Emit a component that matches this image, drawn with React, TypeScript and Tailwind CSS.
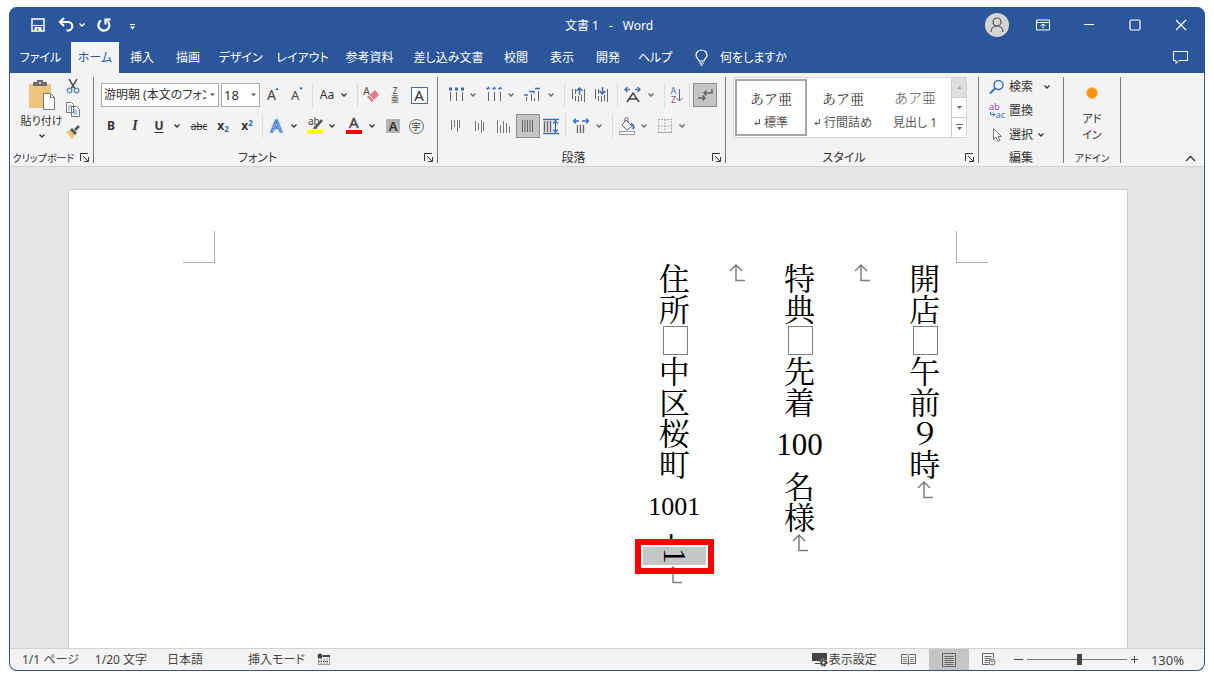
import React, { useState } from 'react'

type IconProps = {
  children: React.ReactNode;
  w?: number;
  h?: number;
}

const Icon: React.FC<IconProps> = ({ children, w = 20, h = 20 }) => (
  <svg width={w} height={h} viewBox={`0 0 ${w} ${h}`} fill="none" stroke="currentColor" className="shrink-0 overflow-visible" aria-hidden="true">
    {children}
  </svg>
)

type ToolProps = {
  label: string;
  children: React.ReactNode;
  className?: string;
  pressed?: boolean;
}

// リボンの小さいボタン
const Tool: React.FC<ToolProps> = ({ label, children, className = 'w-6', pressed = false }) => (
  <button
    type="button"
    aria-label={label}
    className={`flex h-6 shrink-0 items-center justify-center ${className} ${pressed ? 'border border-[#8c8c8c] bg-[#c5c5c5]' : ''}`}
  >
    {children}
  </button>
)

const Chevron = () => (
  <Icon w={8} h={6}>
    <path d="M1.500 1.500 4 4l2.500-2.500" strokeWidth="1.300" />
  </Icon>
)

const Caret: React.FC<{ label: string }> = ({ label }) => (
  <button type="button" aria-label={label} className="mr-1 flex h-6 w-3 shrink-0 items-center justify-center">
    <Chevron />
  </button>
)

const Sep = () => <div className="mx-[3px] h-6 w-px shrink-0 bg-[#dcdcdc]" />

const Divider = () => <div className="mt-1 mb-[3px] w-px shrink-0 bg-[#7c7c7c]" />

const Launcher: React.FC<{ label: string }> = ({ label }) => (
  <button type="button" aria-label={label} className="absolute right-1 bottom-1">
    <Icon w={9} h={9}>
      <path d="M.5 8V.5H8M3 3l5 5M8.500 4v4.500H4" />
    </Icon>
  </button>
)

type GroupProps = {
  title: string;
  children: React.ReactNode;
  className: string;
  launcher?: boolean;
  small?: boolean;
}

const Group: React.FC<GroupProps> = ({ title, children, className, launcher = false, small = false }) => (
  <section aria-label={title} className={`relative flex shrink-0 flex-col ${className}`}>
    <div className="h-[77px]">{children}</div>
    <div className={`h-4 text-center leading-4 whitespace-nowrap ${launcher ? 'pr-4' : ''} ${small ? 'text-[10px]' : ''}`}>{title}</div>
    {launcher && <Launcher label={`${title}の詳細`} />}
  </section>
)

const Clipboard = () => (
  <div className="flex pt-1.5">
    <button type="button" className="ml-2 flex w-[47px] flex-col items-center">
      <Icon w={30} h={32}>
        <path d="M2 5h22v24H2z" fill="#ecc57d" stroke="none" />
        <path d="M6 3h4V1h6v2h4v4H6z" fill="#6b6b6b" stroke="none" />
        <path d="M12 3h2v1.500h-2z" fill="#fff" stroke="none" />
        <path d="M16.500 14.500h7l4 4v12h-11z" fill="#fff" stroke="#777" />
        <path d="M23.500 14.500v4h4" stroke="#777" />
      </Icon>
      <span className="mt-0.5 text-[11px] leading-4 whitespace-nowrap">貼り付け</span>
      <span className="mt-1"><Chevron /></span>
    </button>
    <div className="flex flex-col">
      <button type="button" aria-label="切り取り" className="flex h-[22px] w-4 items-start justify-center">
        <Icon w={14} h={15}>
          <path d="M3 0l6 10M11 0 5 10" stroke="#555" strokeWidth="1.500" />
          <circle cx="3.500" cy="11.500" r="2.300" stroke="#5b88c4" strokeWidth="1.300" />
          <circle cx="10.500" cy="11.500" r="2.300" stroke="#5b88c4" strokeWidth="1.300" />
        </Icon>
      </button>
      <button type="button" aria-label="コピー" className="flex h-[22px] w-4 items-start justify-center">
        <Icon w={14} h={16}>
          <path d="M.5 1.500h5l2 2v8h-7zM5.500 5.500h5l3 3v7h-8z" fill="#fff" stroke="#777" />
          <path d="M2 5h4M2 7h2M2 9h2M7.500 9h3M7.500 11h4M7.500 13h4" stroke="#5b88c4" />
        </Icon>
      </button>
      <button type="button" aria-label="書式のコピー/貼り付け" className="flex h-[22px] w-4 items-start justify-center pt-0.5">
        <Icon w={14} h={14}>
          <path d="M0 7l4-2 5 5-3 4z" fill="#ecc57d" stroke="none" />
          <path d="M4 5l2-2 5 5-2 2z" fill="#555" stroke="none" />
          <path d="M9 5l4-4" stroke="#555" strokeWidth="2.500" />
        </Icon>
      </button>
    </div>
  </div>
)

const FontTools = () => {
  const [font, setFont] = useState('mincho')
  const [size, setSize] = useState('18')

  return (
    <div className="flex flex-col gap-[7px] pt-2.5">
      <div className="flex">
        <div className="relative ml-[7px] w-[118px]">
          <select
            aria-label="フォント"
            value={font}
            onChange={(e) => setFont(e.target.value)}
            className="h-6 w-full appearance-none overflow-hidden border border-[#ababab] bg-white pr-3 pl-0.5"
          >
            <option value="mincho">游明朝 (本文のフォント)</option>
          </select>
          <span className="pointer-events-none absolute top-2.5 right-1">
            <Icon w={5} h={4}><path d="M0 .5h5L2.500 3z" fill="#555" stroke="none" /></Icon>
          </span>
        </div>
        <div className="relative mr-px ml-0.5 w-[39px]">
          <select
            aria-label="フォント サイズ"
            value={size}
            onChange={(e) => setSize(e.target.value)}
            className="h-6 w-full appearance-none border border-[#ababab] bg-white pl-0.5 text-[13px]"
          >
            <option value="18">18</option>
          </select>
          <span className="pointer-events-none absolute top-2.5 right-1">
            <Icon w={5} h={4}><path d="M0 .5h5L2.500 3z" fill="#555" stroke="none" /></Icon>
          </span>
        </div>
        <Tool label="フォント サイズの拡大">
          <Icon>
            <text x="4" y="15" fontSize="14" fill="#444" stroke="none">A</text>
            <path d="M12 5l2-2.500L16 5z" fill="#3b6fb5" stroke="none" />
          </Icon>
        </Tool>
        <Tool label="フォント サイズの縮小">
          <Icon>
            <text x="4" y="15" fontSize="13" fill="#444" stroke="none">A</text>
            <path d="M12 2.500h4L14 5z" fill="#3b6fb5" stroke="none" />
          </Icon>
        </Tool>
        <Sep />
        <Tool label="文字種の変換" className="w-[22px] text-[12px]">Aa</Tool>
        <Caret label="文字種の変換の一覧" />
        <Sep />
        <Tool label="すべての書式をクリア" className="w-[22px]">
          <Icon>
            <text x="1" y="10" fontSize="11" fill="#555" stroke="none">A</text>
            <path d="M13 5l4 5-7 7-5-5z" fill="#e5798c" stroke="none" />
            <path d="M7 10l5 5" stroke="#fff" />
          </Icon>
        </Tool>
        <Tool label="ルビ">
          <span className="flex flex-col items-center text-[8px] leading-2">
            <span>Z</span>
            <span>亜</span>
          </span>
        </Tool>
        <Tool label="囲み線">
          <span className="flex h-[17px] w-[17px] items-center justify-center border border-[#3b6fb5] bg-white text-[15px]">A</span>
        </Tool>
      </div>
      <div className="flex pl-[5px]">
        <Tool label="太字"><b className="text-[12px]">B</b></Tool>
        <Tool label="斜体"><b className="font-['Liberation_Serif',serif] text-[14px] italic">I</b></Tool>
        <Tool label="下線"><b className="text-[12px] underline underline-offset-2">U</b></Tool>
        <Caret label="下線の一覧" />
        <Tool label="取り消し線"><span className="text-[10px] line-through">abc</span></Tool>
        <Tool label="下付き"><b className="text-[12px]">x<sub className="text-[8px] text-[#3b6fb5]">2</sub></b></Tool>
        <Tool label="上付き"><b className="text-[12px]">x<sup className="text-[8px] text-[#3b6fb5]">2</sup></b></Tool>
        <Sep />
        <Tool label="文字の効果と体裁" className="w-[22px]">
          <Icon>
            <text x="4" y="16" fontSize="17" fill="#fff" stroke="#3b7bc8" strokeWidth="1" className="drop-shadow-[0_0_1px_#6fa3e0]">A</text>
          </Icon>
        </Tool>
        <Caret label="文字の効果の一覧" />
        <Tool label="蛍光ペンの色" className="w-[22px]">
          <Icon>
            <text x="3" y="9" fontSize="10" fill="#444" stroke="none">ab</text>
            <path d="M10 12l7-8" stroke="#555" strokeWidth="2.500" />
            <path d="M8 13l1.500-3 3 2.500z" fill="#555" stroke="none" />
            <path d="M2 14h16v4H2z" fill="#ffff00" stroke="none" />
          </Icon>
        </Tool>
        <Caret label="蛍光ペンの色の一覧" />
        <Tool label="フォントの色">
          <Icon>
            <text x="5" y="12" fontSize="15" fill="#444" stroke="#444" strokeWidth=".4">A</text>
            <path d="M2 14h16v4H2z" fill="#ff0000" stroke="none" />
          </Icon>
        </Tool>
        <Caret label="フォントの色の一覧" />
        <Tool label="文字の網かけ" className="w-[22px]">
          <span className="flex h-3.5 w-3.5 items-center justify-center bg-[#b4b4b4] text-[13px] leading-none font-semibold">A</span>
        </Tool>
        <Tool label="囲い文字">
          <span className="flex h-[15px] w-[15px] items-center justify-center rounded-full border border-[#666] text-[9px] leading-none">字</span>
        </Tool>
      </div>
    </div>
  )
}

const ParagraphTools = () => (
  <div className="flex flex-col gap-[7px] pt-2.5 text-[#666]">
    <div className="flex pl-[7px]">
      <Tool label="箇条書き" className="w-[22px]">
        <Icon>
          <path d="M4.500 7v9M10.500 7v9M16.500 7v9" />
          <path d="M3 4h3M9 4h3M15 4h3" stroke="#3b6fb5" strokeWidth="3" />
        </Icon>
      </Tool>
      <Caret label="箇条書きの一覧" />
      <Tool label="段落番号" className="w-[22px]">
        <Icon>
          <path d="M4.500 7v9M10.500 7v9M16.500 7v9" />
          <path d="M2.500 3l1 1 1-1.500 1 1.500M8.500 3l1 1 1-1.500 1 1.500M14.500 3l1 1 1-1.500 1 1.500" stroke="#3b6fb5" strokeWidth="1.300" />
        </Icon>
      </Tool>
      <Caret label="段落番号の一覧" />
      <Tool label="アウトライン">
        <Icon>
          <path d="M3.500 12v4M8.500 9v7M11.500 13v3M15.500 6v10" />
          <path d="M1 10h4M6 6.500h5v2M12 3.500h5" stroke="#3b6fb5" strokeWidth="1.300" />
        </Icon>
      </Tool>
      <Caret label="アウトラインの一覧" />
      <Sep />
      <Tool label="インデントを減らす" className="w-[22px]">
        <Icon>
          <path d="M3.500 4v10M6.500 4v5M6.500 11v5M9.500 11v6M12.500 10v6M15.500 4v13" />
          <path d="M10.500 10V3.500M7.500 6l3-3 3 3" stroke="#3b6fb5" strokeWidth="1.500" />
        </Icon>
      </Tool>
      <Tool label="インデントを増やす">
        <Icon>
          <path d="M3.500 4v10M6.500 4v5M6.500 11v5M9.500 11v6M12.500 10v6M15.500 4v13" />
          <path d="M10.500 2v6.500M7.500 6l3 3 3-3" stroke="#3b6fb5" strokeWidth="1.500" />
        </Icon>
      </Tool>
      <Sep />
      <Tool label="拡張書式">
        <Icon>
          <path d="M4 17l6-9 6 9M6.500 14h7" stroke="#444" strokeWidth="1.500" />
          <path d="M7 4.500H2M4.500 2 2 4.500 4.500 7M12 4.500h5M14.500 2 17 4.500 14.500 7" stroke="#3b6fb5" strokeWidth="1.300" />
        </Icon>
      </Tool>
      <Caret label="拡張書式の一覧" />
      <Sep />
      <Tool label="並べ替え" className="w-[18px]">
        <span className="flex items-center">
          <span className="flex flex-col items-center text-[9px] leading-[9px]">
            <span className="text-[#3b6fb5]">A</span>
            <span className="text-[#8e4da5]">Z</span>
          </span>
          <Icon w={7} h={16}><path d="M3.500 2v12M.5 11l3 3 3-3" /></Icon>
        </span>
      </Tool>
      <Sep />
      <Tool label="編集記号の表示/非表示" pressed>
        <Icon>
          <path d="M17 4v4H9M11.500 5.500 9 8l2.500 2.500M3 13h7M7.500 10.500 10 13l-2.500 2.500" strokeWidth="1.500" />
        </Icon>
      </Tool>
    </div>
    <div className="flex pl-1.5">
      <Tool label="上揃え">
        <Icon><path d="M5.500 4v10M8.500 4v7M11.500 4v12M13.500 4v8" stroke="#777" /></Icon>
      </Tool>
      <Tool label="上下中央揃え">
        <Icon><path d="M5.500 5v10M8.500 7v7M11.500 4v13M13.500 6v9" stroke="#777" /></Icon>
      </Tool>
      <Tool label="下揃え">
        <Icon><path d="M3.500 4v13M6.500 9v8M9.500 5v12M12.500 7v10M15.500 10v7" stroke="#777" /></Icon>
      </Tool>
      <Tool label="両端揃え" pressed>
        <Icon><path d="M4.500 4v12M7 4v12M9.500 4v12M12 4v12M14.500 4v12" /></Icon>
      </Tool>
      <Tool label="均等割り付け" className="w-[22px]">
        <Icon>
          <path d="M3.500 5v11M6.500 5v11M9.500 5v11" strokeWidth="1.500" />
          <path d="M2 3.500h16M2 17.500h16M14.500 5v11M12 7.500 14.500 5 17 7.500M12 13.500l2.500 2.500 2.500-2.500" stroke="#3b6fb5" strokeWidth="1.300" />
        </Icon>
      </Tool>
      <Sep />
      <Tool label="行と段落の間隔">
        <Icon>
          <path d="M6.500 9v8M9.500 9v8M12.500 9v8" strokeWidth="1.300" />
          <path d="M8 5H2.500M5 2.500 2.500 5 5 7.500M11 5h6.500M15 2.500 17.500 5 15 7.500" stroke="#3b6fb5" strokeWidth="1.300" />
        </Icon>
      </Tool>
      <Caret label="間隔の一覧" />
      <Sep />
      <Tool label="塗りつぶし" className="w-[22px]">
        <Icon>
          <path d="M9 4l6 6-5 4-5-5zM8 6V3a1.500 1.500 0 0 1 3 0v4" fill="#fff" />
          <path d="M14 8q4 1 2 5" stroke="#3b6fb5" strokeWidth="2" />
          <path d="M2.500 15.500h15v3h-15z" fill="#fff" stroke="#999" />
        </Icon>
      </Tool>
      <Caret label="塗りつぶしの一覧" />
      <Tool label="罫線" className="w-[22px]">
        <Icon>
          <path d="M3.500 3.500h13v13h-13zM10 3.500v13M3.500 10h13" stroke="#999" strokeDasharray="1.500 1.500" />
          <path d="M3 16.500h14" stroke="#aaa" />
        </Icon>
      </Tool>
      <Caret label="罫線の一覧" />
    </div>
  </div>
)

const styleCards = [
  { name: '標準', mark: true, tone: "font-['Noto_Serif_CJK_JP','Noto_Sans_CJK_JP',serif] text-[#333]", selected: true },
  { name: '行間詰め', mark: true, tone: "font-['Noto_Serif_CJK_JP','Noto_Sans_CJK_JP',serif] text-[#333]", selected: false },
  { name: '見出し 1', mark: false, tone: 'font-light text-[#555]', selected: false },
]

const StyleGallery = () => (
  <div className="flex pt-1 pl-[7px]">
    <div className="flex h-[61px] border border-[#d6d6d6] bg-white pl-px">
      {styleCards.map((card) => (
        <button
          key={card.name}
          type="button"
          className={`my-px flex w-[72px] flex-col items-center justify-center gap-2 border-2 pt-1 ${card.selected ? 'border-[#a6a6a6]' : 'border-transparent'}`}
        >
          <span className={`text-[14px] leading-[18px] [font-feature-settings:normal] ${card.tone}`}>あア亜</span>
          <span className="flex items-center gap-1 leading-4 text-[#555]">
            {card.mark && (
              <Icon w={6} h={7}><path d="M5.500 0v4.500H1M3 2.500l-2 2 2 2" /></Icon>
            )}
            {card.name}
          </span>
        </button>
      ))}
      <div className="flex w-[15px] flex-col border-l border-[#d0d0d0] text-[#666]">
        <button type="button" aria-label="前の行" className="flex flex-1 items-center justify-center bg-[#dedede] text-[#aaa]">
          <Icon w={5} h={3}><path d="M0 3 2.500 0 5 3z" fill="currentColor" stroke="none" /></Icon>
        </button>
        <button type="button" aria-label="次の行" className="flex flex-1 items-center justify-center border-y border-[#d0d0d0]">
          <Icon w={5} h={3}><path d="M0 0h5L2.500 3z" fill="currentColor" stroke="none" /></Icon>
        </button>
        <button type="button" aria-label="その他" className="flex flex-1 items-center justify-center">
          <Icon w={7} h={7}>
            <path d="M0 .5h7" />
            <path d="M1 3h5L3.500 6z" fill="currentColor" stroke="none" />
          </Icon>
        </button>
      </div>
    </div>
  </div>
)

const EditTools = () => (
  <div className="flex flex-col pt-0.5 pl-2.5">
    <button type="button" className="flex h-6 items-center gap-1">
      <Icon w={16} h={16}>
        <circle cx="9.500" cy="6" r="4.500" stroke="#3b6fb5" strokeWidth="1.500" />
        <path d="M6 9.500 1 14.500" stroke="#3b6fb5" strokeWidth="2" />
      </Icon>
      検索
      <span className="ml-1.5"><Chevron /></span>
    </button>
    <button type="button" className="flex h-6 items-center gap-1">
      <span className="w-4 text-[9px] leading-2">
        <span className="block text-left text-[#8e4da5]">ab</span>
        <span className="flex items-center justify-end text-[#3b6fb5]">
          <Icon w={6} h={6}><path d="M.5 0v2.500H5M3 .5l2 2-2 2" /></Icon>
          ac
        </span>
      </span>
      置換
    </button>
    <button type="button" className="flex h-6 items-center gap-1">
      <Icon w={16} h={16}>
        <path d="M4.500 1.500v11l2.500-2.500 2 4.500 2-1-2-4h3.500z" fill="#fff" stroke="#777" />
      </Icon>
      選択
      <Chevron />
    </button>
  </div>
)

const Ribbon = () => (
  <div className="flex h-[94px] shrink-0 border-b border-[#d2d2d2] bg-[#f3f3f3]">
    <Group title="クリップボード" className="w-[83px]" launcher small><Clipboard /></Group>
    <Divider />
    <Group title="フォント" className="w-[343px]" launcher><FontTools /></Group>
    <Divider />
    <Group title="段落" className="w-[287px]" launcher><ParagraphTools /></Group>
    <Divider />
    <Group title="スタイル" className="w-[252px]" launcher><StyleGallery /></Group>
    <Divider />
    <Group title="編集" className="w-[84px]"><EditTools /></Group>
    <Divider />
    <Group title="アドイン" className="w-[56px]" small>
      <button type="button" className="flex w-full flex-col items-center gap-3 pt-3.5 text-[11px] leading-4">
        <span className="h-3 w-3 rounded-full border border-[#ffc77a] bg-[#ff8f0a]" />
        <span className="w-6">アドイン</span>
      </button>
    </Group>
    <Divider />
    <button type="button" aria-label="リボンを折りたたむ" className="mt-auto mr-2 mb-1 ml-auto">
      <Icon w={11} h={7}><path d="M1 6l4.500-4.500L10 6" strokeWidth="1.300" /></Icon>
    </button>
  </div>
)

const TitleBar = () => (
  <header className="flex h-[35px] shrink-0 text-white">
    <div className="flex flex-1 items-center pl-5">
      <button type="button" aria-label="上書き保存">
        <Icon w={16} h={16}>
          <path d="M2 2h12v12H2z" strokeWidth="1.500" />
          <path d="M2 8.500h12" />
          <path d="M5 14v-3.500h6V14" fill="#fff" />
          <path d="M7.500 11.500v2" stroke="#2b579a" strokeWidth="1.500" />
        </Icon>
      </button>
      <button type="button" aria-label="元に戻す" className="ml-3">
        <Icon w={16} h={16}>
          <path d="M6 1 2 5l4 4M2 5h8a4 4 0 0 1 0 8.500H8.500" strokeWidth="2.200" />
        </Icon>
      </button>
      <button type="button" aria-label="元に戻す操作の一覧" className="ml-1"><Chevron /></button>
      <button type="button" aria-label="繰り返し" className="ml-2.5">
        <Icon w={16} h={16}>
          <path d="M5 3.500a5.500 5.500 0 1 0 6.500.500M9.500 7.500V2.500h5" strokeWidth="2.200" />
        </Icon>
      </button>
      <button type="button" aria-label="クイック アクセス ツール バーのユーザー設定" className="ml-[18px] pt-1">
        <Icon w={5} h={6}>
          <path d="M0 .5h5" />
          <path d="M0 2.500h5L2.500 5.500z" fill="#fff" stroke="none" />
        </Icon>
      </button>
    </div>
    <h1 className="mr-4 flex items-center gap-2.5 pt-0.5 text-[12px]">
      <span>文書 1</span>
      <span>-</span>
      <span>Word</span>
    </h1>
    <div className="flex flex-1 items-center justify-end">
      <button type="button" aria-label="アカウント" className="mr-[11px] flex h-6 w-6 items-center justify-center rounded-full bg-[#d4d4d4] text-[#555]">
        <Icon w={16} h={18}>
          <circle cx="8" cy="6" r="4" strokeWidth="1.200" />
          <path d="M2 16c0-8 12-8 12 0" strokeWidth="1.200" />
        </Icon>
      </button>
      <button type="button" aria-label="リボンの表示オプション" className="flex h-8 w-[46px] items-center justify-center">
        <Icon w={14} h={12}>
          <path d="M.5 1h13v10H.5zM.5 3.500h13M7 9.500V5M4.500 7 7 5l2.500 2" />
        </Icon>
      </button>
      <button type="button" aria-label="最小化" className="flex h-8 w-[46px] items-center justify-center">
        <Icon w={10} h={10}><path d="M0 4.500h10" /></Icon>
      </button>
      <button type="button" aria-label="最大化" className="flex h-8 w-[46px] items-center justify-center">
        <Icon w={12} h={12}><rect x="1" y="1" width="10" height="10" rx="1.500" strokeWidth="1.200" /></Icon>
      </button>
      <button type="button" aria-label="閉じる" className="flex h-8 w-[46px] items-center justify-center">
        <Icon w={12} h={12}><path d="M1 1l10 10M11 1 1 11" strokeWidth="1.200" /></Icon>
      </button>
    </div>
  </header>
)

const tabs = [
  { name: 'ファイル', width: 'w-[61px]' },
  { name: 'ホーム', width: 'w-12' },
  { name: '挿入', width: 'w-[46px]' },
  { name: '描画', width: 'w-[46px]' },
  { name: 'デザイン', width: 'w-[59px]' },
  { name: 'レイアウト', width: 'w-[65px]' },
  { name: '参考資料', width: 'w-[69px]' },
  { name: '差し込み文書', width: 'w-[89px]' },
  { name: '校閲', width: 'w-[46px]' },
  { name: '表示', width: 'w-[46px]' },
  { name: '開発', width: 'w-[46px]' },
  { name: 'ヘルプ', width: 'w-12' },
]

const TabBar = () => {
  const [active, setActive] = useState('ホーム')

  return (
    <nav className="flex h-[31px] shrink-0 text-white">
      {tabs.map((tab) => (
        <button
          key={tab.name}
          type="button"
          onClick={() => setActive(tab.name)}
          className={`shrink-0 whitespace-nowrap ${tab.width} ${tab.name === active ? 'bg-[#f3f3f3] text-[#2b579a]' : ''}`}
        >
          {tab.name}
        </button>
      ))}
      <button type="button" className="ml-4 flex items-center gap-3">
        <Icon w={13} h={17}>
          <path d="M4 12c0-2-3-3-3-6a5.500 5 0 0 1 11 0c0 3-3 4-3 6zM4 14h5M5 16h3" strokeWidth="1.200" />
        </Icon>
        何をしますか
      </button>
      <button type="button" aria-label="コメント" className="mr-4 ml-auto">
        <Icon w={15} h={13}>
          <path d="M.5.500h14v9H6l-3 3v-3H.5z" />
        </Icon>
      </button>
    </nav>
  )
}

const ReturnMark = () => (
  <svg width="18" height="19" viewBox="0 0 18 19" fill="none" stroke="#7f7f7f" strokeWidth="1.500" className="shrink-0" aria-hidden="true">
    <path d="M2 8l6-6 6 6M8 2v15.500h9" />
  </svg>
)

const Run: React.FC<{ children: string }> = ({ children }) => (
  <span className="font-['Noto_Serif_CJK_JP','Noto_Sans_CJK_JP',serif] leading-[31px] [writing-mode:vertical-rl]">{children}</span>
)

// 横倒しになる半角の文字
const SideRun: React.FC<{ children: string }> = ({ children }) => (
  <span className="leading-[31px] [writing-mode:vertical-rl]">{children}</span>
)

// 全角スペースの編集記号
const WideSpace = () => (
  <span className="flex h-[31px] items-center pl-0.5">
    <span className="h-[29px] w-[25px] border border-[#808080]" />
  </span>
)

const Line: React.FC<{ children?: React.ReactNode }> = ({ children }) => (
  <p className="flex flex-1 flex-col items-center">
    {children}
    <ReturnMark />
  </p>
)

const Document = () => (
  <main className="flex min-h-0 flex-1 bg-[#e6e6e6] pt-[22px] pr-[76px] pl-[58px]">
    <article className="flex-1 overflow-hidden border border-b-0 border-[#cfcfcf] bg-white pt-[41px]">
      <div className="flex justify-between pr-[139px] pl-[114px]">
        <div className="h-8 w-8 border-r border-b border-[#b0b0b0]" />
        <div className="h-8 w-8 border-b border-l border-[#b0b0b0]" />
      </div>
      <div className="flex justify-end pr-[171px]">
        <div className="flex w-[313px] flex-row-reverse font-['Liberation_Serif','Noto_Serif_CJK_JP',serif] text-[31px] leading-none text-black [font-feature-settings:normal]">
          <Line>
            <Run>開店</Run>
            <WideSpace />
            <Run>午前９時</Run>
          </Line>
          <Line />
          <Line>
            <Run>特典</Run>
            <WideSpace />
            <Run>先着</Run>
            <span className="leading-[53px]">100</span>
            <Run>名様</Run>
          </Line>
          <Line />
          <Line>
            <Run>住所</Run>
            <WideSpace />
            <Run>中区桜町</Run>
            <span className="text-[26px] leading-[53px]">1001</span>
            <SideRun>-</SideRun>
            <span className="relative mt-1 flex w-full justify-center bg-[#c6c6c6] py-px">
              <SideRun>1</SideRun>
              <span className="absolute -top-2 -right-2 -left-2 h-[35px] border-6 border-[#fe0000]" />
            </span>
          </Line>
        </div>
      </div>
    </article>
  </main>
)

const StatusBar = () => {
  const [zoom, setZoom] = useState(53)

  return (
    <footer className="flex h-[22px] shrink-0 items-center border-t border-[#d2d2d2] bg-[#f3f3f3] pl-3 text-[#444]">
      <span>1/1 ページ</span>
      <span className="ml-4">1/20 文字</span>
      <span className="ml-5">日本語</span>
      <span className="ml-[45px]">挿入モード</span>
      <button type="button" aria-label="マクロの記録" className="ml-3">
        <Icon w={14} h={13}>
          <path d="M1.500 3.500h11v8h-11zM4 5.500v6M7 5.500v6M10 5.500v6M2 8.500h10" strokeDasharray="1 1" />
          <path d="M6 2h7v2H6z" fill="currentColor" stroke="none" />
          <circle cx="3" cy="3" r="2.500" fill="currentColor" stroke="none" />
        </Icon>
      </button>
      <button type="button" className="ml-auto flex items-center gap-px">
        <Icon w={16} h={15}>
          <path d="M0 1h15v8H0zM3 11h5v1H3z" fill="currentColor" stroke="none" />
          <circle cx="11.500" cy="10.500" r="3.500" fill="#f3f3f3" stroke="#f3f3f3" />
          <circle cx="11.500" cy="10.500" r="3" strokeWidth="2" strokeDasharray="1.600 .8" />
          <circle cx="11.500" cy="10.500" r="2" strokeWidth="1.300" />
        </Icon>
        表示設定
      </button>
      <button type="button" aria-label="閲覧モード" className="ml-3 flex h-full w-10 items-center justify-center text-[#666]">
        <Icon w={15} h={13}>
          <path d="M.5 1.500h6l1 1 1-1h6v9h-6l-1 1-1-1h-6zM7.500 2.500v9" />
          <path d="M2 4.500h4M2 6.500h4M2 8.500h4M9 4.500h4M9 6.500h4M9 8.500h4" stroke="#888" />
        </Icon>
      </button>
      <button type="button" aria-label="印刷レイアウト" className="flex h-full w-10 items-center justify-center bg-[#c5c5c5] text-[#666]">
        <Icon w={14} h={14}>
          <path d="M.5.500h13v13H.5zM2.500 3.500h9M2.500 5.500h9M2.500 7.500h9M2.500 9.500h9M2.500 11.500h9" />
        </Icon>
      </button>
      <button type="button" aria-label="Web レイアウト" className="flex h-full w-10 items-center justify-center text-[#666]">
        <Icon w={14} h={13}>
          <path d="M7 11.500H.5V.5h11V5M2.500 3.500h7M2.500 5.500h6M2.500 7.500h4M2.500 9.500h3" />
          <circle cx="10" cy="9" r="3" fill="#fff" />
          <path d="M8 7l4 1-2 1 1 2.500z" fill="currentColor" stroke="none" />
        </Icon>
      </button>
      <button type="button" aria-label="縮小" className="ml-1 flex h-full w-3 items-center justify-center">
        <Icon w={9} h={9}><path d="M0 4.500h9" /></Icon>
      </button>
      <input
        type="range"
        aria-label="ズーム"
        min={0}
        max={100}
        value={zoom}
        onChange={(e) => setZoom(Number(e.target.value))}
        className="mx-0.5 h-3 w-[100px] appearance-none bg-[linear-gradient(#777,#777)] bg-[length:100%_1px] bg-center bg-no-repeat [&::-webkit-slider-thumb]:h-[11px] [&::-webkit-slider-thumb]:w-[5px] [&::-webkit-slider-thumb]:appearance-none [&::-webkit-slider-thumb]:bg-[#444]"
      />
      <button type="button" aria-label="拡大" className="flex h-full w-3 items-center justify-center">
        <Icon w={9} h={9}><path d="M1 4.500h7M4.500 1v7" /></Icon>
      </button>
      <button type="button" className="mr-5 ml-2.5 text-[13px]">130%</button>
    </footer>
  )
}

const App: React.FC = () => (
  <div className="h-screen bg-white px-[9px] pt-[7px] pb-1.5">
    <div className="flex h-full flex-col overflow-hidden rounded-lg border border-t-0 border-[#2b579a] bg-[#2b579a] font-['Noto_Sans','Noto_Sans_CJK_JP',sans-serif] text-[12px] leading-4 text-[#333] [font-feature-settings:'palt']">
      <TitleBar />
      <TabBar />
      <Ribbon />
      <Document />
      <StatusBar />
    </div>
  </div>
)

export default App
